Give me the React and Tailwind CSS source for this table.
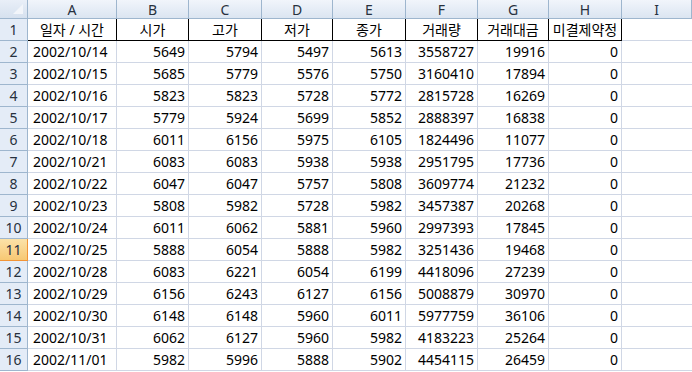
const cols = ["A", "B", "C", "D", "E", "F", "G", "H", "I"];

const heads = ["일자 / 시간", "시가", "고가", "저가", "종가", "거래량", "거래대금", "미결제약정"];

const rows = [
  ["2002/10/14", 5649, 5794, 5497, 5613, 3558727, 19916, 0],
  ["2002/10/15", 5685, 5779, 5576, 5750, 3160410, 17894, 0],
  ["2002/10/16", 5823, 5823, 5728, 5772, 2815728, 16269, 0],
  ["2002/10/17", 5779, 5924, 5699, 5852, 2888397, 16838, 0],
  ["2002/10/18", 6011, 6156, 5975, 6105, 1824496, 11077, 0],
  ["2002/10/21", 6083, 6083, 5938, 5938, 2951795, 17736, 0],
  ["2002/10/22", 6047, 6047, 5757, 5808, 3609774, 21232, 0],
  ["2002/10/23", 5808, 5982, 5728, 5982, 3457387, 20268, 0],
  ["2002/10/24", 6011, 6062, 5881, 5960, 2997393, 17845, 0],
  ["2002/10/25", 5888, 6054, 5888, 5982, 3251436, 19468, 0],
  ["2002/10/28", 6083, 6221, 6054, 6199, 4418096, 27239, 0],
  ["2002/10/29", 6156, 6243, 6127, 6156, 5008879, 30970, 0],
  ["2002/10/30", 6148, 6148, 5960, 6011, 5977759, 36106, 0],
  ["2002/10/31", 6062, 6127, 5960, 5982, 4183223, 25264, 0],
  ["2002/11/01", 5982, 5996, 5888, 5902, 4454115, 26459, 0],
];

const RowHead = ({ n, active }) => (
  <div
    className={
      active
        ? "h-[22px] flex items-center justify-center border-r border-b border-[#f29436] bg-gradient-to-b from-[#fbe2a8] to-[#f7c873] text-[#1f2f3f]"
        : "h-[22px] flex items-center justify-center border-r border-b border-[#9eb6ce] bg-[#e4ecf7] text-[#27313e]"
    }
  >
    {n}
  </div>
);

export default function App() {
  return (
    <div
      className="w-[692px] h-[372px] overflow-hidden bg-white text-[14px] text-black"
      style={{ fontFamily: '"Noto Sans", "Noto Sans CJK KR", sans-serif' }}
    >
      <div className="grid grid-cols-[28px_89px_72px_73px_71px_73px_72px_71px_73px_1fr]">
        {/* column header row */}
        <div className="relative h-[19px] border-r border-b border-[#9eb6ce] bg-gradient-to-b from-[#e9eff8] to-[#d6e1ef]">
          <div className="absolute right-[4px] bottom-[4px] w-0 h-0 border-l-[10px] border-l-transparent border-b-[10px] border-b-[#f2f5fa]" />
        </div>
        {cols.map((c) => (
          <div
            key={c}
            className="h-[19px] flex items-center justify-center border-r border-b border-[#9eb6ce] bg-gradient-to-b from-[#f1f5fb] to-[#dbe5f1] text-[#27313e]"
          >
            {c}
          </div>
        ))}

        {/* row 1 - titles */}
        <RowHead n={1} />
        {heads.map((h, i) => (
          <div
            key={h}
            className="h-[22px] flex items-center justify-center whitespace-nowrap border-r border-b border-black"
          >
            {h}
          </div>
        ))}
        <div className="h-[22px] border-b border-[#d0d7e5]" />

        {rows.map((r, ri) => (
          <React.Fragment key={r[0]}>
            <RowHead n={ri + 2} active={ri + 2 === 11} />
            <div className="h-[22px] flex items-center pl-[5px] border-r border-b border-[#d0d7e5]">
              {r[0]}
            </div>
            {r.slice(1).map((v, ci) => (
              <div
                key={ci}
                className="h-[22px] flex items-center justify-end pr-[3px] border-r border-b border-[#d0d7e5]"
              >
                {v}
              </div>
            ))}
            <div className="h-[22px] border-b border-[#d0d7e5]" />
          </React.Fragment>
        ))}
      </div>
    </div>
  );
}

import React from "react";
